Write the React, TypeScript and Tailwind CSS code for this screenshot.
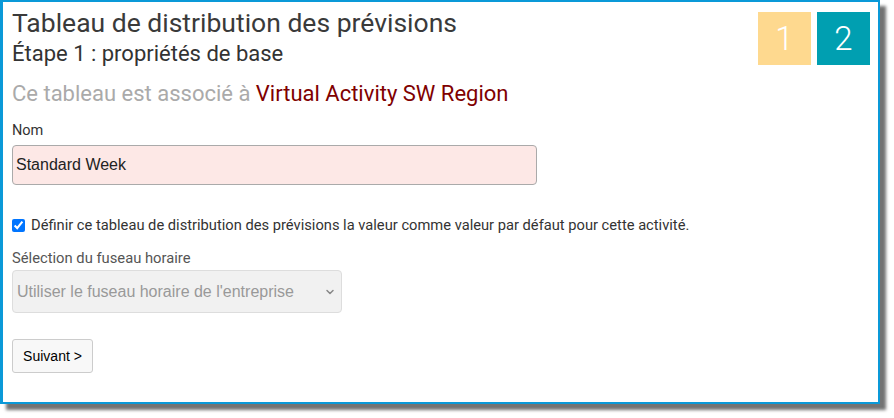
import { ChevronDown } from "lucide-react";

const roboto = { fontFamily: "Roboto, 'Noto Sans', sans-serif" };
const arial = { fontFamily: "'Liberation Sans', Arial, sans-serif" };

export default function App() {
  return (
    <div className="w-[894px] h-[418px] bg-white">
      {/* Dialog frame */}
      <div
        className="w-[880px] h-[404px] bg-white border-2 border-l-[3px] border-[#0a99d8] shadow-[6px_6px_3px_rgba(0,0,0,0.55)] pl-[9px] pr-[8px] pt-[5px] text-[#333]"
        style={roboto}
      >
        {/* Header */}
        <div className="flex justify-between">
          <div>
            <h1 className="text-[26.5px] leading-[32px] text-[#3a3a3a]">
              Tableau de distribution des prévisions
            </h1>
            <h2 className="mt-[3px] text-[22px] leading-[24px] text-[#333]">
              Étape 1 : propriétés de base
            </h2>
          </div>
          <div className="flex gap-[6px] pt-[5px]">
            <StepBadge n={1} className="bg-[#fed98f]" />
            <StepBadge n={2} className="bg-[#009fb1]" />
          </div>
        </div>

        <p className="mt-4 text-[22px] leading-[24px] text-[#aaa]">
          Ce tableau est associé à{" "}
          <span className="text-[#800000]">Virtual Activity SW Region</span>
        </p>

        {/* Name */}
        <label className="block mt-[15px] text-[14.5px] leading-[20px] text-[#333]">Nom</label>
        <input
          defaultValue="Standard Week"
          className="mt-[4px] block w-[525px] h-[40px] px-[3px] rounded-[4px] border border-[#aaa] bg-[#fde8e6] text-[16px] text-[#222] outline-none"
          style={arial}
        />

        {/* Default checkbox */}
        <label className="mt-[30px] flex items-center gap-[6px] text-[14.7px] leading-[20px] text-[#333]">
          <input type="checkbox" defaultChecked className="w-[13px] h-[13px] accent-[#0075ff]" />
          Définir ce tableau de distribution des prévisions la valeur comme valeur par défaut pour cette activité.
        </label>

        {/* Timezone */}
        <label className="block mt-[13px] text-[14.75px] leading-[20px] text-[#555]">
          Sélection du fuseau horaire
        </label>
        <div className="relative mt-[2px] w-[330px]">
          <select
            disabled
            className="appearance-none block w-full h-[43px] pl-[4px] rounded-[4px] border border-[#ddd] bg-[#f1f1f1] text-[16px] text-[#999]"
            style={arial}
          >
            <option>Utiliser le fuseau horaire de l'entreprise</option>
          </select>
          <ChevronDown
            className="absolute right-[6px] top-[16px] w-[12px] h-[12px] text-[#888] pointer-events-none"
            strokeWidth={3}
          />
        </div>

        <button
          type="button"
          className="mt-[26px] block w-[81px] h-[34px] rounded-[3px] border border-[#ccc] bg-[#f8f8f8] text-[14px] text-black"
          style={arial}
        >
          Suivant &gt;
        </button>
      </div>
    </div>
  );
}

function StepBadge({ n, className }: { n: number; className: string }) {
  return (
    <div
      className={`w-[53px] h-[53px] flex items-center justify-center text-white text-[33px] font-light ${className}`}
    >
      {n}
    </div>
  );
}
